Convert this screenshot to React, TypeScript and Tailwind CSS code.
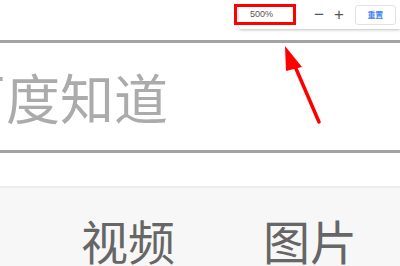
import React from "react";

export default function App() {
  const cjk = { fontFamily: '"Noto Sans CJK SC", "Noto Sans", sans-serif' };
  const lat = { fontFamily: '"Liberation Sans", Arial, sans-serif' };
  return (
    <div className="relative w-[400px] h-[266px] overflow-hidden bg-white" style={cjk}>
      <div className="h-[40px] bg-white" />
      <div className="h-[113px] border-y-[3px] border-[#a3a3a3] bg-white flex items-center overflow-hidden">
        <span className="ml-[-48px] whitespace-nowrap text-[54px] leading-none text-[#ababab]">百度知道</span>
      </div>
      <div className="h-[33px] bg-white" />
      <div className="h-[80px] border-t-[2px] border-[#ececec] bg-[#f7f7f7] flex items-start pt-[28px]">
        <span className="ml-[81px] text-[47px] leading-none text-[#666666]">视频</span>
        <span className="ml-[88px] text-[47px] leading-none text-[#666666]">图片</span>
      </div>

      {/* zoom popup */}
      <div className="absolute left-[239px] top-0 right-0 h-[29px] bg-white shadow-[0_1px_3px_rgba(0,0,0,0.25)] rounded-bl-[2px] flex items-center">
        <span className="ml-[11px] text-[9px] text-[#555] w-[40px]" style={lat}>500%</span>
        <span className="ml-[24px] text-[17px] leading-none text-[#555]" style={lat}>−</span>
        <span className="ml-[10px] text-[17px] leading-none text-[#555]" style={lat}>+</span>
        <div className="ml-[11px] w-[41px] h-[20px] border border-[#e2e2e2] rounded-[3px] flex items-center justify-center text-[8px] font-bold text-[#4a86f0]">重置</div>
      </div>

      {/* annotation box */}
      <div className="absolute left-[234px] top-[4px] w-[62px] h-[21px] border-[3px] border-[#ff0000]" />

      {/* arrow */}
      <svg className="absolute left-0 top-0" width="400" height="266" viewBox="0 0 400 266">
        <line x1="319" y1="122" x2="294" y2="64" stroke="#ff0000" strokeWidth="3.5" strokeLinecap="round" />
        <polygon points="285,46 302,67 286,71" fill="#ff0000" />
      </svg>
    </div>
  );
}
